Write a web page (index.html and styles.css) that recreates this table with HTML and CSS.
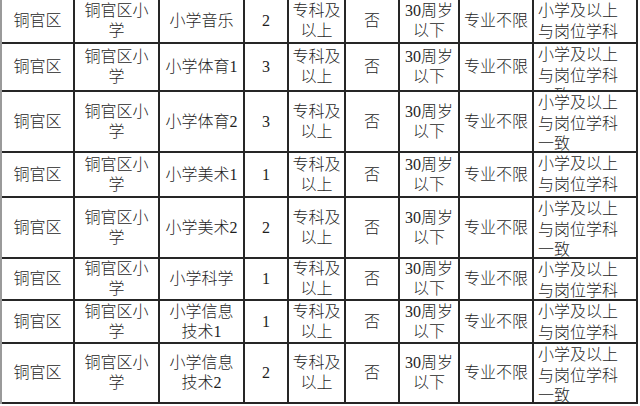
FILE: index.html
```html
<!DOCTYPE html>
<html lang="zh-CN">
<head>
<meta charset="utf-8">
<title>岗位表</title>
<link rel="stylesheet" href="styles.css">
</head>
<body>
<div class="sheet">
  <div class="c">铜官区</div><div class="c">铜官区小<br>学</div><div class="c">小学音乐</div><div class="c">2</div><div class="c">专科及<br>以上</div><div class="c">否</div><div class="c">30周岁<br>以下</div><div class="c">专业不限</div><div class="c q">小学及以上<br>与岗位学科<br>一致</div>
  <div class="c">铜官区</div><div class="c">铜官区小<br>学</div><div class="c">小学体育1</div><div class="c">3</div><div class="c">专科及<br>以上</div><div class="c">否</div><div class="c">30周岁<br>以下</div><div class="c">专业不限</div><div class="c q">小学及以上<br>与岗位学科<br>一致</div>
  <div class="c">铜官区</div><div class="c">铜官区小<br>学</div><div class="c">小学体育2</div><div class="c">3</div><div class="c">专科及<br>以上</div><div class="c">否</div><div class="c">30周岁<br>以下</div><div class="c">专业不限</div><div class="c q">小学及以上<br>与岗位学科<br>一致</div>
  <div class="c">铜官区</div><div class="c">铜官区小<br>学</div><div class="c">小学美术1</div><div class="c">1</div><div class="c">专科及<br>以上</div><div class="c">否</div><div class="c">30周岁<br>以下</div><div class="c">专业不限</div><div class="c q">小学及以上<br>与岗位学科<br>一致</div>
  <div class="c">铜官区</div><div class="c">铜官区小<br>学</div><div class="c">小学美术2</div><div class="c">2</div><div class="c">专科及<br>以上</div><div class="c">否</div><div class="c">30周岁<br>以下</div><div class="c">专业不限</div><div class="c q">小学及以上<br>与岗位学科<br>一致</div>
  <div class="c">铜官区</div><div class="c">铜官区小<br>学</div><div class="c">小学科学</div><div class="c">1</div><div class="c">专科及<br>以上</div><div class="c">否</div><div class="c">30周岁<br>以下</div><div class="c">专业不限</div><div class="c q">小学及以上<br>与岗位学科<br>一致</div>
  <div class="c">铜官区</div><div class="c">铜官区小<br>学</div><div class="c">小学信息<br>技术1</div><div class="c">1</div><div class="c">专科及<br>以上</div><div class="c">否</div><div class="c">30周岁<br>以下</div><div class="c">专业不限</div><div class="c q">小学及以上<br>与岗位学科<br>一致</div>
  <div class="c">铜官区</div><div class="c">铜官区小<br>学</div><div class="c">小学信息<br>技术2</div><div class="c">2</div><div class="c">专科及<br>以上</div><div class="c">否</div><div class="c">30周岁<br>以下</div><div class="c">专业不限</div><div class="c q">小学及以上<br>与岗位学科<br>一致</div>
</div>
</body>
</html>
```
FILE: styles.css
```css
html, body {
  margin: 0;
  padding: 0;
  background: #fff;
}
body {
  width: 640px;
  height: 406px;
  overflow: hidden;
  font-family: "Liberation Serif", "Noto Sans CJK SC", sans-serif;
  font-size: 16px;
  font-weight: 300;
  color: #1e1e1e;
}
.sheet {
  display: grid;
  width: 638px;
  grid-template-columns: 73px 85px 85px 44px 57px 54px 60px 74px 104px;
  grid-template-rows: 44px 48px 61px 45px 61px 42px 43px 60px;
  border-left: 2px solid #9a9a9a;
}
.c {
  box-sizing: border-box;
  border-right: 2px solid #262626;
  border-bottom: 2px solid #262626;
  display: flex;
  align-items: center;
  justify-content: center;
  text-align: center;
  line-height: 20px;
  overflow: hidden;
  white-space: nowrap;
}
.q {
  align-items: flex-start;
  justify-content: flex-start;
  text-align: left;
  padding: 1px 0 0 4px;
  line-height: 20.5px;
}
```
